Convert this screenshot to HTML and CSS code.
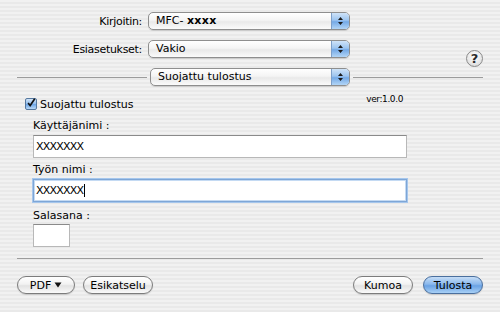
FILE: index.html
```html
<!DOCTYPE html>
<html lang="fi">
<head>
    <meta charset="UTF-8">
    <title>Tulosta</title>
    <link rel="stylesheet" href="styles.css">
</head>
<body>
    <div class="dialog">
        <div class="head">
            <div class="rows">
                <div class="row">
                    <span class="row-label">Kirjoitin:</span>
                    <div class="popup"><span class="popup-text">MFC- <b>xxxx</b></span><span class="arrows"><svg width="7" height="10" viewBox="0 0 7 10"><path d="M3.5 1 L6 4 L1 4 Z M1 6 L6 6 L3.5 9 Z" fill="#1c1c1c"/></svg></span></div>
                </div>
                <div class="row">
                    <span class="row-label">Esiasetukset:</span>
                    <div class="popup"><span class="popup-text">Vakio</span><span class="arrows"><svg width="7" height="10" viewBox="0 0 7 10"><path d="M3.5 1 L6 4 L1 4 Z M1 6 L6 6 L3.5 9 Z" fill="#1c1c1c"/></svg></span></div>
                </div>
            </div>
            <div class="help">?</div>
        </div>

        <div class="pane-row">
            <div class="rule"></div>
            <div class="popup pane"><span class="popup-text">Suojattu tulostus</span><span class="arrows"><svg width="7" height="10" viewBox="0 0 7 10"><path d="M3.5 1 L6 4 L1 4 Z M1 6 L6 6 L3.5 9 Z" fill="#1c1c1c"/></svg></span></div>
            <div class="rule"></div>
        </div>

        <div class="panel">
            <div class="check-row">
                <span class="checkbox"><svg width="12" height="12" viewBox="0 0 12 12"><path d="M2.5 6 L5 9 L10.5 1" fill="none" stroke="#111" stroke-width="2"/></svg></span>
                <span class="check-label">Suojattu tulostus</span>
                <span class="version">ver:1.0.0</span>
            </div>

            <div class="field-label">Käyttäjänimi :</div>
            <div class="textbox">XXXXXXX</div>

            <div class="field-label">Työn nimi :</div>
            <div class="textbox focus">XXXXXXX<span class="caret"></span></div>

            <div class="field-label">Salasana :</div>
            <div class="textbox small"></div>
        </div>

        <div class="rule bottom-rule"></div>

        <div class="buttons">
            <span class="btn pdf">PDF <svg width="8" height="6" viewBox="0 0 8 6"><path d="M0.5 0.5 L7.5 0.5 L4 5.5 Z" fill="#111"/></svg></span>
            <span class="btn preview">Esikatselu</span>
            <span class="spacer"></span>
            <span class="btn cancel">Kumoa</span>
            <span class="btn default">Tulosta</span>
        </div>
    </div>
</body>
</html>
```

FILE: styles.css
```css
body {
    margin: 0;
    font-family: "DejaVu Sans", Verdana, sans-serif;
    font-size: 11px;
    color: #000;
    background: repeating-linear-gradient(to bottom, #f1f1f1 0 2px, #e9e9e9 2px 4px);
    height: 312px;
    overflow: hidden;
}
.dialog {
    padding: 12px 17px 0 17px;
}
.head {
    display: flex;
}
.rows {
    display: flex;
    flex-direction: column;
    gap: 10px;
}
.row {
    display: flex;
    align-items: center;
    height: 18px;
}
.row-label {
    width: 125px;
    margin-right: 6px;
    text-align: right;
    letter-spacing: -0.3px;
}
.popup {
    display: flex;
    align-items: stretch;
    width: 202px;
    height: 18px;
    box-sizing: border-box;
    border: 1px solid #8e8e8e;
    border-radius: 5px;
    overflow: hidden;
    background: linear-gradient(to bottom, #ffffff, #f4f4f4 45%, #e9e9e9 55%, #fbfbfb);
    box-shadow: 0 1px 0 rgba(0, 0, 0, 0.12);
}
.popup-text {
    flex: 1;
    padding-left: 7px;
    line-height: 16px;
}
.popup-text b {
    letter-spacing: 0.3px;
}
.arrows {
    width: 17px;
    display: flex;
    align-items: center;
    justify-content: center;
    border-left: 1px solid #7d9fc9;
    background: linear-gradient(to bottom, #cfe3f8, #9cc4ef 45%, #74a9e6 55%, #b2d5f6);
}
.help {
    margin-left: auto;
    margin-top: 38px;
    width: 17px;
    height: 17px;
    box-sizing: border-box;
    border: 1px solid #8a8a8a;
    border-radius: 50%;
    background: radial-gradient(circle at 50% 35%, #ffffff, #e2e2e2 70%, #cfcfcf);
    text-align: center;
    font-weight: bold;
    font-size: 13px;
    line-height: 15px;
    color: #2a2a2a;
}
.pane-row {
    display: flex;
    align-items: center;
    margin-top: 1px;
}
.rule {
    flex: 1;
    height: 1px;
    background: #9c9c9c;
}
.popup.pane {
    width: 200px;
    margin: 0 3px;
}
.panel {
    padding: 0 76px 0 16px;
}
.check-row {
    display: flex;
    align-items: center;
    margin: 12px 0 0 -8px;
    height: 12px;
}
.checkbox {
    width: 12px;
    height: 12px;
    box-sizing: border-box;
    border: 1px solid #55789f;
    border-radius: 2px;
    background: linear-gradient(to bottom, #d2e4f7, #8fbbec 50%, #6ea6e6 55%, #b9d8f6);
    display: flex;
}
.checkbox svg {
    margin: -2px 0 0 0;
}
.check-label {
    margin-left: 3px;
}
.version {
    margin-left: auto;
    margin-right: 4px;
    font-size: 9px;
    letter-spacing: -0.4px;
    align-self: flex-start;
    margin-top: -4px;
}
.field-label {
    height: 14px;
    line-height: 14px;
    margin-top: 9px;
}
.textbox {
    height: 23px;
    box-sizing: border-box;
    margin-top: 2px;
    border: 1px solid #b8b8b8;
    border-top-color: #8a8a8a;
    background: #fff;
    padding-left: 2px;
    line-height: 21px;
    letter-spacing: -0.8px;
    display: flex;
    align-items: center;
}
.textbox + .field-label {
    margin-top: 5px;
}
.textbox.focus {
    border: 1px solid #7ea6d6;
    box-shadow: 0 0 0 1px #a5c6ec, inset 0 0 0 1px #c4daf3;
}
.caret {
    width: 1px;
    height: 13px;
    margin-left: 1px;
    background: #000;
}
.textbox.focus + .field-label {
    margin-top: 7px;
}
.textbox.small {
    width: 37px;
    margin-top: 1px;
}
.bottom-rule {
    margin-top: 11px;
}
.buttons {
    display: flex;
    gap: 8px;
    margin-top: 17px;
}
.spacer {
    flex: 1;
}
.btn {
    height: 18px;
    box-sizing: border-box;
    border: 1px solid #7c7c7c;
    border-radius: 9px;
    background: linear-gradient(to bottom, #ffffff, #f2f2f2 45%, #e2e2e2 55%, #fafafa);
    display: flex;
    align-items: center;
    justify-content: center;
    gap: 3px;
    box-shadow: 0 1px 1px rgba(0, 0, 0, 0.15);
}
.btn.pdf {
    width: 58px;
}
.btn.preview {
    width: 70px;
}
.btn.cancel {
    width: 60px;
}
.btn.default {
    width: 60px;
    margin-left: 2px;
    border-color: #4a6f9e;
    background: linear-gradient(to bottom, #c6ddf6, #8ab8ec 45%, #6aa2e4 55%, #a8d0f6);
}
```
